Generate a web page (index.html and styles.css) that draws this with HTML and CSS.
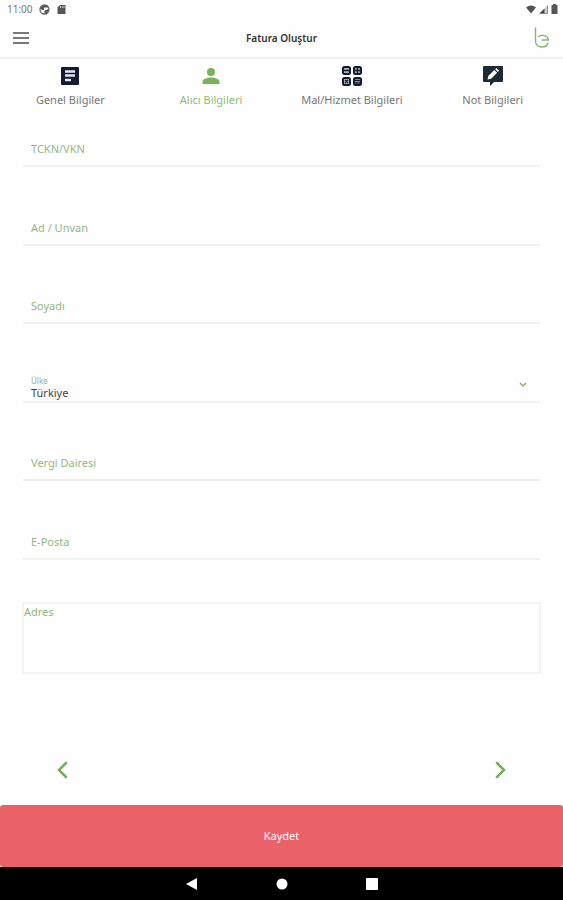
FILE: index.html
```html
<!DOCTYPE html>
<html lang="tr">
<head>
<meta charset="utf-8">
<meta name="viewport" content="width=device-width, initial-scale=1">
<title>Fatura Oluştur</title>
<link rel="stylesheet" href="styles.css">
</head>
<body>
<div class="status">
  <span class="clock">11:00</span>
  <svg width="11" height="11" viewBox="0 0 11 11"><circle cx="5.500" cy="5.500" r="4.500" fill="none" stroke="#666" stroke-width="1.300"/><path d="M1 4 4 1.500 8 1l1.500 2.500H5v2.500H3zM5.500 6.500 10 5 8 9.500 5.500 10z" fill="#555"/></svg>
  <svg width="9" height="11" viewBox="0 0 9 11"><path d="M3 1h5.500v9H.5V3.500z" fill="#555"/><path d="M3.500 2v2M5.300 2v2M7 2v2" stroke="#ddd" stroke-width=".8"/></svg>
  <span class="spacer"></span>
  <svg width="10" height="9" viewBox="0 0 10 9"><path d="M0 2.500Q5-1.500 10 2.500L5 8.500z" fill="#555"/></svg>
  <svg width="9" height="9" viewBox="0 0 9 9"><path d="M8.500.5v8h-8z" fill="#ccc"/><path d="M5.500 3.500v5h-5z" fill="#444"/><path d="M8.500.5v8h-8" fill="none" stroke="#777" stroke-width=".8"/></svg>
  <svg width="7" height="10" viewBox="0 0 7 10"><path d="M2 0h3v1h1.500v9h-6V1H2z" fill="#555"/></svg>
</div>
<header class="topbar">
  <button class="icon-button" type="button" aria-label="Menü"><svg width="16" height="12" viewBox="0 0 16 12"><path d="M0 1h16M0 6h16M0 11h16" stroke="#77777c" stroke-width="2"/></svg></button>
  <h1>Fatura Oluştur</h1>
  <svg class="logo" width="16" height="22" viewBox="0 0 16 22" fill="none" stroke="#86b86c" stroke-width="1.400" stroke-linecap="round"><path d="M1.500 1v13c0 3.500 2.500 6 6.500 6 3 0 5.300-1.500 6-4"/><path d="M4.500 9.500c3-2 9-1.500 10 3.500H8"/></svg>
</header>
<nav class="tabs">
  <a href="#genel">
    <svg width="18" height="18" viewBox="0 0 18 18"><rect width="18" height="18" rx="1" fill="#141b30"/><path d="M4 4.500h10M4 8.500h10M4 13h6" stroke="#e4e6ee" stroke-width="2.400"/></svg>
    <span>Genel Bilgiler</span>
  </a>
  <a class="active" href="#alici" aria-current="page">
    <svg width="18" height="18" viewBox="0 0 18 18" fill="#76b45c"><circle cx="9" cy="5" r="4"/><path d="M.5 17v-2c0-3 4.500-4.500 8.500-4.500s8.500 1.500 8.500 4.500v2z"/></svg>
    <span>Alıcı Bilgileri</span>
  </a>
  <a href="#mal">
    <svg width="22" height="22" viewBox="0 0 22 22"><g fill="#aeb4bd" stroke="#151c2b" stroke-width="2"><rect x="2" y="2" width="7" height="7" rx="1.500"/><rect x="13" y="2" width="7" height="7" rx="1.500"/><rect x="2" y="13" width="7" height="7" rx="1.500"/><rect x="13" y="13" width="7" height="7" rx="1.500"/></g><path d="M3 5.500h5M14 5.500h5M16.500 3v5M4 15l3 3M7 15l-3 3M14 15.500h5M14 18h5" stroke="#151c2b" stroke-width="1.400"/></svg>
    <span>Mal/Hizmet Bilgileri</span>
  </a>
  <a href="#not">
    <svg width="22" height="22" viewBox="0 0 22 22"><path d="M2 1h18q1 0 1 1v14q0 1-1 1h-8l-4 4v-4H2q-1 0-1-1V2q0-1 1-1z" fill="#1d2a35"/><path d="m5.500 14.500.8-3.500 6-6 2.800 2.800-6 6zM13.200 4.200l1.200-1.200 2.700 2.700-1.200 1.200z" fill="#fff"/></svg>
    <span>Not Bilgileri</span>
  </a>
</nav>
<form class="form">
  <div class="fields">
    <div class="field"><label for="tckn">TCKN/VKN</label><input id="tckn" type="text"></div>
    <div class="field"><label for="ad">Ad / Unvan</label><input id="ad" type="text"></div>
    <div class="field"><label for="soyad">Soyadı</label><input id="soyad" type="text"></div>
    <div class="field filled">
      <label for="ulke">Ülke</label>
      <select id="ulke"><option>Türkiye</option></select>
      <svg class="caret" width="8" height="6" viewBox="0 0 8 6"><path d="m1 1 3 3 3-3" fill="none" stroke="#85a778" stroke-width="1.300"/></svg>
    </div>
    <div class="field"><label for="vergi">Vergi Dairesi</label><input id="vergi" type="text"></div>
    <div class="field"><label for="eposta">E-Posta</label><input id="eposta" type="email"></div>
  </div>
  <div class="address"><label for="adres">Adres</label><textarea id="adres"></textarea></div>
  <div class="pager">
    <button class="icon-button" type="button" aria-label="Geri"><svg width="12" height="18" viewBox="0 0 12 18"><path d="m10 2-7 7 7 7" fill="none" stroke="#76ae5c" stroke-width="2.500" stroke-linecap="round"/></svg></button>
    <button class="icon-button" type="button" aria-label="İleri"><svg width="12" height="18" viewBox="0 0 12 18"><path d="m2 2 7 7-7 7" fill="none" stroke="#76ae5c" stroke-width="2.500" stroke-linecap="round"/></svg></button>
  </div>
  <button class="save" type="submit">Kaydet</button>
</form>
<div class="system">
  <button class="icon-button" type="button" aria-label="Sistem geri"><svg width="12" height="12" viewBox="0 0 12 12"><path d="M0 6 11 0v12z" fill="#fff"/></svg></button>
  <button class="icon-button" type="button" aria-label="Ana ekran"><svg width="12" height="12" viewBox="0 0 12 12"><circle cx="6" cy="6" r="5.500" fill="#fff"/></svg></button>
  <button class="icon-button" type="button" aria-label="Son uygulamalar"><svg width="12" height="12" viewBox="0 0 12 12"><rect width="12" height="12" rx="1" fill="#fff"/></svg></button>
</div>
</body>
</html>
```
FILE: styles.css
```css
* {
  box-sizing: border-box;
}

body {
  margin: 0;
  min-height: 100vh;
  display: flex;
  flex-direction: column;
  background: #fefefe;
  color: #555;
  font: 11px/16px "Noto Sans", sans-serif;
}

svg {
  display: block;
  flex: none;
}

button,
input,
select,
textarea {
  font: inherit;
  border: 0;
  padding: 0;
  background: none;
}

.icon-button {
  display: flex;
}

.status {
  display: flex;
  align-items: center;
  gap: 3px;
  height: 18px;
  padding: 0 5px 0 7px;
}

.clock {
  font-size: 10px;
  color: #777;
  margin-right: 3px;
}

.status svg:nth-of-type(2) {
  margin-left: 4px;
}

.spacer {
  flex: 1;
}

.topbar {
  display: grid;
  grid-template-columns: 1fr auto 1fr;
  align-items: center;
  height: 41px;
  padding: 0 13px;
  border-bottom: 2px solid #f0f0f0;
}

h1 {
  margin: 0;
  font-size: 10px;
  font-weight: 600;
  color: #333;
}

.logo {
  justify-self: end;
}

.tabs {
  display: grid;
  grid-template-columns: repeat(4, 1fr);
  padding-top: 6px;
}

.tabs a {
  display: grid;
  grid-template-rows: 22px 16px;
  row-gap: 5px;
  place-items: center;
  color: #777;
  text-decoration: none;
  white-space: nowrap;
}

.tabs a.active {
  color: #8fbd7b;
}

.form {
  flex: 1;
  display: flex;
  flex-direction: column;
}

.fields {
  flex: 1;
  display: flex;
  flex-direction: column;
  justify-content: space-between;
  margin: 25px 23px 0;
}

.field {
  display: grid;
  align-items: center;
  height: 34px;
  border-bottom: 2px solid #f0f1f2;
}

.field > * {
  grid-area: 1 / 1;
}

.field label {
  padding-left: 8px;
  color: #93b783;
}

.field input,
.field select {
  width: 100%;
  height: 32px;
  padding: 0 8px;
  color: #444;
}

.field select {
  appearance: none;
  padding-top: 16px;
}

.field.filled label {
  align-self: start;
  padding-top: 6px;
  font-size: 8px;
  line-height: 12px;
}

.caret {
  justify-self: end;
  margin-right: 13px;
}

.address {
  display: grid;
  height: 72px;
  margin: 42px 22px 0;
  border: 2px solid #f3f4f4;
}

.address > * {
  grid-area: 1 / 1;
}

.address label {
  color: #93b783;
}

.address textarea {
  width: 100%;
  padding: 16px 8px 0;
  resize: none;
}

.pager {
  display: flex;
  justify-content: space-between;
  padding: 87px 56px 26px;
}

.save {
  height: 62px;
  border-radius: 3px;
  background: #ea6267;
  color: #fff;
}

.system {
  display: flex;
  justify-content: center;
  align-items: center;
  gap: 78px;
  height: 33px;
  background: #000;
}
```
